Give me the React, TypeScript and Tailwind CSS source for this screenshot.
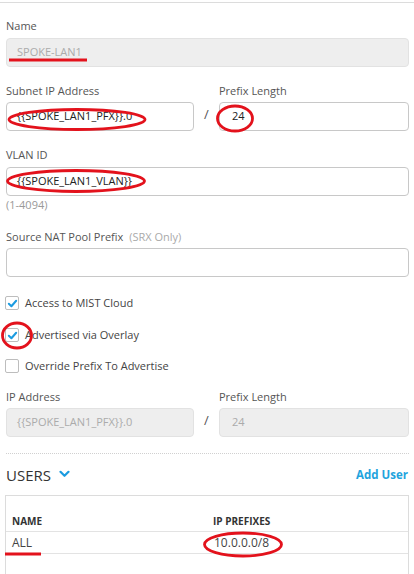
import React from "react";

const font = "font-['Open_Sans','Liberation_Sans',sans-serif]";

function Label({ children, className = "" }: { children: React.ReactNode; className?: string }) {
  return <div className={`h-4 leading-4 text-[11px] text-[#555] ${className}`}>{children}</div>;
}

function Input({ value = "", disabled = false, className = "" }: { value?: string; disabled?: boolean; className?: string }) {
  return (
    <div
      className={`h-[29px] rounded-[4px] border flex items-center px-[10px] text-[11px] ${
        disabled ? "bg-[#eeeeee] border-[#e2e2e2] text-[#ababab]" : "bg-white border-[#c8c8c8] text-[#222]"
      } ${className}`}
    >
      {value}
    </div>
  );
}

function Check({ checked, label, className = "" }: { checked: boolean; label: string; className?: string }) {
  return (
    <div className={`h-4 flex items-center ${className}`}>
      <div className="w-[14px] h-[14px] ml-[-1px] rounded-[2px] border border-[#bdbdbd] bg-white flex items-center justify-center">
        {checked && (
          <svg width="11" height="11" viewBox="0 0 12 12">
            <path d="M2 6.3 L4.8 9 L10 3" fill="none" stroke="#1b9be0" strokeWidth="2.2" strokeLinecap="round" strokeLinejoin="round" />
          </svg>
        )}
      </div>
      <span className="ml-[6px] text-[11px] text-[#444] leading-4">{label}</span>
    </div>
  );
}

export default function App() {
  return (
    <div className={`relative w-[414px] h-[574px] overflow-hidden bg-white ${font}`}>
      <div className="h-[2px]" />
      <div className="h-px bg-[#dcdcdc]" />
      <div className="pl-[6px] pr-[5px]">
        <Label className="mt-[15px]">Name</Label>
        <Input className="mt-[4px]" value="SPOKE-LAN1" disabled />

        <div className="mt-[16px] flex">
          <div className="w-[188px]">
            <Label>Subnet IP Address</Label>
            <Input className="mt-[3px]" value="{{SPOKE_LAN1_PFX}}.0" />
          </div>
          <div className="w-[25px] flex items-end justify-center pb-[7px] text-[13px] text-[#555]">/</div>
          <div className="flex-1">
            <Label>Prefix Length</Label>
            <Input className="mt-[3px] px-[12px]" value="24" />
          </div>
        </div>

        <Label className="mt-[16px]">VLAN ID</Label>
        <Input className="mt-[4px]" value="{{SPOKE_LAN1_VLAN}}" />
        <div className="mt-[2px] h-[14px] leading-[14px] text-[11px] text-[#999]">(1-4094)</div>

        <Label className="mt-[17px]">
          Source NAT Pool Prefix <span className="ml-[3px] text-[#aaa]">(SRX Only)</span>
        </Label>
        <Input className="mt-[3px]" />

        <Check className="mt-[18px]" checked label="Access to MIST Cloud" />
        <Check className="mt-[16px]" checked label="Advertised via Overlay" />
        <Check className="mt-[15px]" checked={false} label="Override Prefix To Advertise" />

        <div className="mt-[15px] flex">
          <div className="w-[188px]">
            <Label>IP Address</Label>
            <Input className="mt-[3px]" value="{{SPOKE_LAN1_PFX}}.0" disabled />
          </div>
          <div className="w-[25px] flex items-end justify-center pb-[7px] text-[13px] text-[#555]">/</div>
          <div className="flex-1">
            <Label>Prefix Length</Label>
            <Input className="mt-[3px] px-[12px]" value="24" disabled />
          </div>
        </div>

        <div className="mt-[16px] border-t border-dotted border-[#d0d0d0]" />

        <div className="mt-[10px] h-[22px] flex items-center justify-between">
          <div className="flex items-center">
            <span className="text-[15px] text-[#333] leading-[22px]">USERS</span>
            <svg className="ml-[8px] mt-[-3px]" width="11" height="8" viewBox="0 0 11 8">
              <path d="M1.5 1.8 L5.5 5.8 L9.5 1.8" fill="none" stroke="#1b9be0" strokeWidth="2.2" strokeLinecap="round" strokeLinejoin="round" />
            </svg>
          </div>
          <span className="text-[11.5px] font-bold text-[#23a3dd] mr-[1px]">Add User</span>
        </div>
      </div>

      <div className="mt-[9px] ml-[5px] w-[404px] border-t border-l border-r border-[#dcdcdc] h-[90px]">
        <div className="h-[36px] pt-[18px] flex border-b border-[#e3e3e3] text-[10px] font-bold text-[#333] leading-[14px]">
          <div className="w-[207px] pl-[6px]">NAME</div>
          <div>IP PREFIXES</div>
        </div>
        <div className="h-[22px] flex items-center border-b border-[#e3e3e3] text-[12px] text-[#444]">
          <div className="w-[208px] pl-[6px]">ALL</div>
          <div>10.0.0.0/8</div>
        </div>
      </div>

      {/* red annotations */}
      <svg className="absolute left-0 top-0 pointer-events-none" width="414" height="574">
        <g fill="none" stroke="#e3121c" strokeWidth="2.8">
          <line x1="9" y1="60" x2="87" y2="60" />
          <ellipse cx="77" cy="119.5" rx="68" ry="10" />
          <ellipse cx="235" cy="118.5" rx="17.5" ry="12.5" />
          <ellipse cx="76" cy="181" rx="68.5" ry="10.5" />
          <ellipse cx="17" cy="335.5" rx="14.5" ry="12.5" />
          <line x1="5" y1="554" x2="41" y2="554" />
          <ellipse cx="243" cy="544.5" rx="38.5" ry="11.5" />
        </g>
      </svg>
    </div>
  );
}
